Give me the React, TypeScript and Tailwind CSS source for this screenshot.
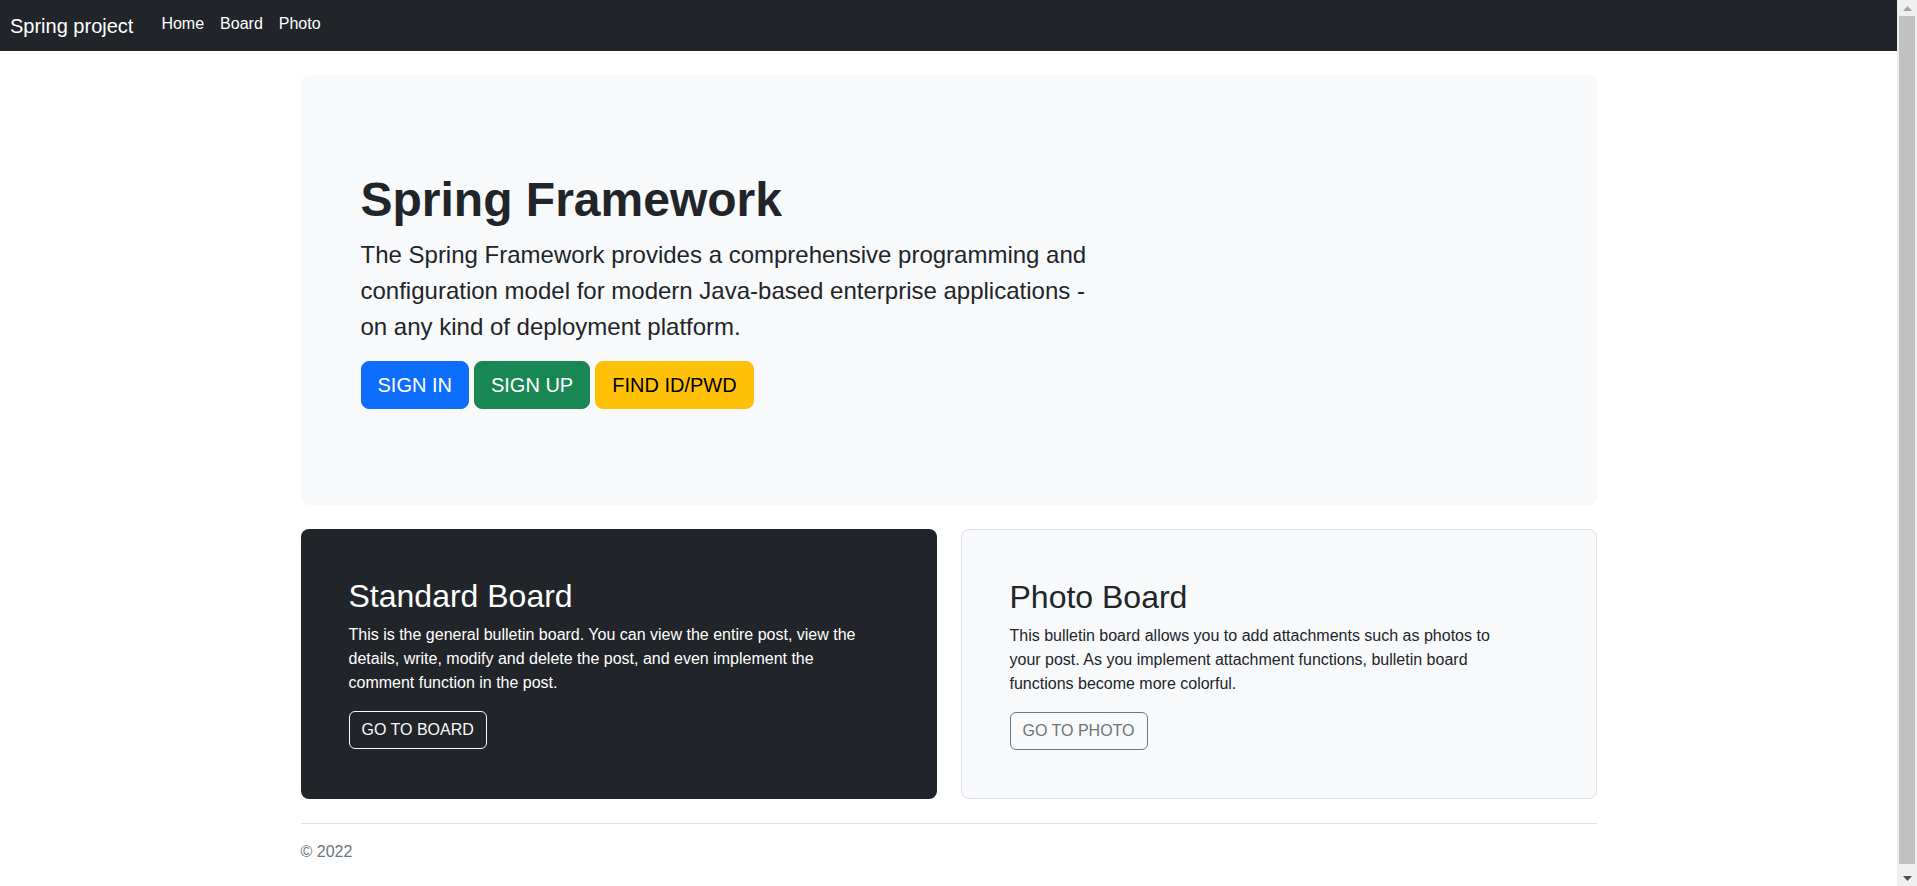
const font = "font-['Liberation_Sans',Arial,sans-serif]";

const navLinks = ['Home', 'Board', 'Photo'];

function Scrollbar() {
  return (
    <div className="flex h-screen w-5 shrink-0 flex-col items-center bg-[#f0f0f0]">
      <div className="flex h-4 items-center justify-center">
        <svg width="9" height="5" viewBox="0 0 9 5">
          <path d="M4.5 0 L9 5 L0 5 Z" fill="#a3a3a3" />
        </svg>
      </div>
      <div className="mb-[6px] w-4 flex-1 bg-[#c1c1c1]" />
      <div className="flex h-4 items-center justify-center">
        <svg width="9" height="5" viewBox="0 0 9 5">
          <path d="M0 0 L9 0 L4.5 5 Z" fill="#505050" />
        </svg>
      </div>
    </div>
  );
}

export default function App() {
  return (
    <div className={`flex h-screen overflow-hidden bg-white text-[#212529] ${font}`}>
      <div className="min-w-0 flex-1">
        {/* Navbar */}
        <nav className="flex h-[51px] items-center bg-[#212529] pl-[10px]">
          <a href="#" className="mr-[20px] text-[20px] leading-[30px] text-white">
            Spring project
          </a>
          <ul className="flex pb-1">
            {navLinks.map((name) => (
              <li key={name}>
                <a href="#" className="block px-2 text-base leading-6 text-white">
                  {name}
                </a>
              </li>
            ))}
          </ul>
        </nav>

        <main className="mx-auto w-[1296px] py-6">
          {/* Hero */}
          <div className="mb-6 rounded-lg bg-[#f8f9fa] p-12">
            <div className="px-3 py-12">
              <h1 className="mb-2 text-[48px] font-bold leading-[1.2]">Spring Framework</h1>
              <p className="mb-4 max-w-[750px] text-[24px] leading-[1.5]">
                The Spring Framework provides a comprehensive programming and configuration model for
                modern Java-based enterprise applications - on any kind of deployment platform.
              </p>
              <div className="flex gap-[5px]">
                <button className="h-12 rounded-lg border border-[#0d6efd] bg-[#0d6efd] px-4 text-[20px] text-white">
                  SIGN IN
                </button>
                <button className="h-12 rounded-lg border border-[#198754] bg-[#198754] px-4 text-[20px] text-white">
                  SIGN UP
                </button>
                <button className="h-12 rounded-lg border border-[#ffc107] bg-[#ffc107] px-4 text-[20px] text-black">
                  FIND ID/PWD
                </button>
              </div>
            </div>
          </div>

          {/* Boards */}
          <div className="grid grid-cols-2 gap-6">
            <div className="h-full rounded-lg bg-[#212529] p-12 text-white">
              <h2 className="mb-2 text-[32px] font-normal leading-[1.2]">Standard Board</h2>
              <p className="mb-4 max-w-[512px] text-base leading-6">
                This is the general bulletin board. You can view the entire post, view the details,
                write, modify and delete the post, and even implement the comment function in the
                post.
              </p>
              <button className="h-[38px] rounded-md border border-[#f8f9fa] px-3 text-base text-[#f8f9fa]">
                GO TO BOARD
              </button>
            </div>
            <div className="h-full rounded-lg border border-[#dee2e6] bg-[#f8f9fa] p-12">
              <h2 className="mb-2 text-[32px] font-normal leading-[1.2]">Photo Board</h2>
              <p className="mb-4 max-w-[512px] text-base leading-6">
                This bulletin board allows you to add attachments such as photos to your post. As you
                implement attachment functions, bulletin board functions become more colorful.
              </p>
              <button className="h-[38px] rounded-md border border-[#6c757d] px-3 text-base text-[#6c757d]">
                GO TO PHOTO
              </button>
            </div>
          </div>

          {/* Footer */}
          <footer className="mt-6 border-t border-[#dee2e6] pt-4 text-base leading-6 text-[#6c757d]">
            © 2022
          </footer>
        </main>
      </div>
      <Scrollbar />
    </div>
  );
}
